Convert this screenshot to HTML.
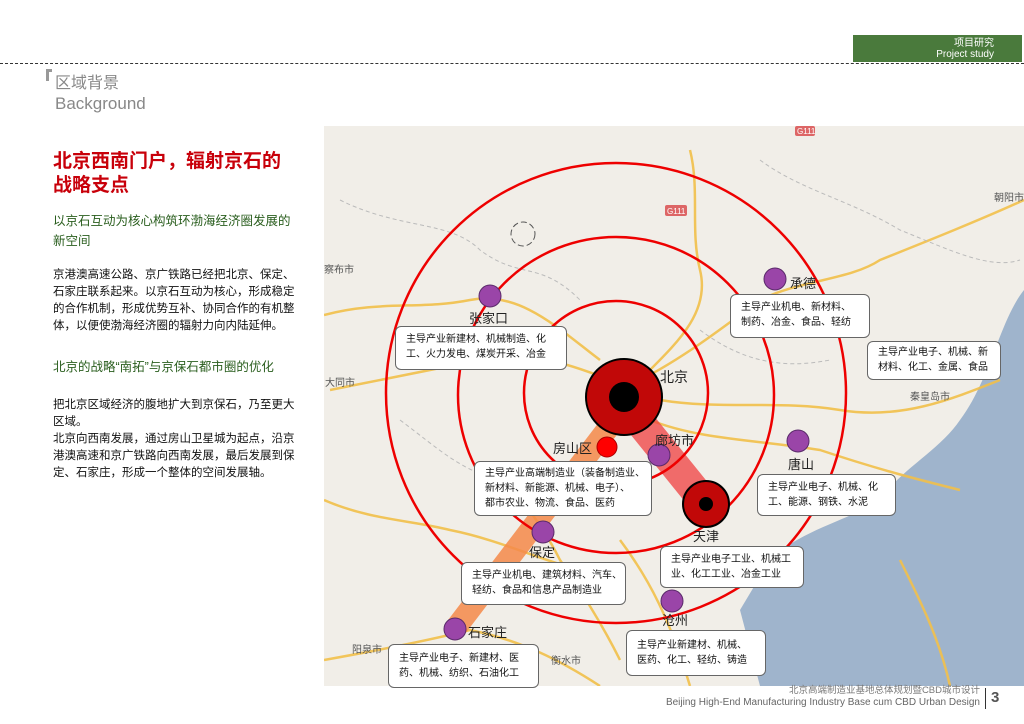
<!DOCTYPE html>
<html><head><meta charset="utf-8"><style>
*{margin:0;padding:0;box-sizing:border-box}
body{width:1024px;height:724px;background:#fff;position:relative;overflow:hidden;font-family:"Liberation Sans","Noto Sans CJK SC",sans-serif}
.a{position:absolute;white-space:nowrap}
.box{position:absolute;background:#fff;border:1px solid #666;border-radius:6px;font-size:10px;line-height:15px;padding:5px 0 0 10px;color:#111;white-space:nowrap}
p{margin:0}
</style></head><body>
<div class="a" style="left:853px;top:35px;width:169px;height:27px;background:#4a7a3c;color:#fff;font-size:10px;line-height:11px;text-align:right;padding:3px 28px 0 0">项目研究<br>Project study</div>
<div class="a" style="left:0;top:63px;width:1024px;border-top:1px dashed #333"></div>
<div class="a" style="left:46px;top:69px;width:6px;height:12px;border-left:3px solid #999;border-top:3px solid #999"></div>
<div class="a" style="left:55px;top:74px;font-size:16px;color:#888;line-height:20px">区域背景</div>
<div class="a" style="left:55px;top:94px;font-size:17px;color:#888;line-height:20px">Background</div>
<div class="a" style="left:53px;top:150px;font-size:19px;font-weight:bold;color:#c8000a;line-height:24px">北京西南门户，辐射京石的<br>战略支点</div>
<div class="a" style="left:53px;top:211px;font-size:12.5px;color:#2a5e1e;line-height:20px">以京石互动为核心构筑环渤海经济圈发展的<br>新空间</div>
<div class="a" style="left:53px;top:267px;font-size:11.5px;color:#111;line-height:17px">京港澳高速公路、京广铁路已经把北京、保定、<br>石家庄联系起来。以京石互动为核心，形成稳定<br>的合作机制，形成优势互补、协同合作的有机整<br>体，以便使渤海经济圈的辐射力向内陆延伸。</div>
<div class="a" style="left:53px;top:358px;font-size:12.5px;color:#2a5e1e;line-height:18px">北京的战略“南拓”与京保石都市圈的优化</div>
<div class="a" style="left:53px;top:397px;font-size:11.5px;color:#111;line-height:17px">把北京区域经济的腹地扩大到京保石，乃至更大<br>区域。<br>北京向西南发展，通过房山卫星城为起点，沿京<br>港澳高速和京广铁路向西南发展，最后发展到保<br>定、石家庄，形成一个整体的空间发展轴。</div>

<svg class="a" style="left:324px;top:126px" width="700" height="560" viewBox="324 126 700 560">
<rect x="324" y="126" width="700" height="560" fill="#f1eee8"/>
<path d="M1024 290 C1000 320 990 380 960 420 C940 450 900 470 880 500 C850 520 800 530 770 560 L740 610 L760 686 L1024 686 Z" fill="#9fb4cc"/>
<g fill="none" stroke="#f2c04a" stroke-width="2.5" opacity="0.9">
<path d="M324 315 C380 300 420 310 470 300 C520 290 560 330 600 360"/>
<path d="M330 390 C380 380 430 370 480 360 C520 350 560 360 610 380"/>
<path d="M640 380 C680 360 720 330 760 300 C800 280 850 280 880 260 C930 240 980 220 1024 200"/>
<path d="M660 400 C720 410 780 400 840 410 C900 420 950 400 1000 380"/>
<path d="M650 420 C700 440 760 440 820 450 C880 470 920 480 960 490"/>
<path d="M500 470 C520 500 540 520 560 560 C580 590 600 620 620 660"/>
<path d="M690 150 C700 190 690 230 700 270 C710 310 680 340 650 370"/>
<path d="M324 500 C370 520 410 520 450 530 C500 540 540 560 580 570"/>
<path d="M620 540 C650 580 670 620 690 686"/>
<path d="M324 660 C380 650 430 640 470 630 C520 640 560 660 600 686"/>
<path d="M900 560 C920 600 940 640 950 686"/>
</g>
<g fill="none" stroke="#bbb" stroke-width="1" stroke-dasharray="4 3">
<path d="M340 200 C400 230 450 220 480 250 C520 280 540 260 580 300"/>
<path d="M760 160 C800 190 850 200 900 230 C950 250 990 270 1020 260"/>
<path d="M400 420 C440 450 460 470 500 480"/>
<path d="M700 330 C740 360 780 370 830 360"/>
</g>
<line x1="622" y1="410" x2="455" y2="629" stroke="#f58a4a" stroke-width="22" opacity="0.85"/>
<line x1="630" y1="410" x2="706" y2="504" stroke="#f04040" stroke-width="30" opacity="0.75"/>
<g fill="none" stroke="#e00" stroke-width="2.5">
<circle cx="616" cy="393" r="230"/>
<circle cx="616" cy="395" r="158"/>
<circle cx="616" cy="393" r="92"/>
</g>
<circle cx="523" cy="234" r="12" fill="none" stroke="#555" stroke-width="1" stroke-dasharray="6 3"/>
<circle cx="624" cy="397" r="38" fill="#c10808" stroke="#000" stroke-width="2"/>
<circle cx="624" cy="397" r="15" fill="#000"/>
<circle cx="706" cy="504" r="23" fill="#c10808" stroke="#000" stroke-width="2"/>
<circle cx="706" cy="504" r="7" fill="#000"/>
<circle cx="607" cy="447" r="10" fill="#f00" stroke="#a00"/>
<g fill="#9a45a8" stroke="#5a2a6a" stroke-width="1">
<circle cx="490" cy="296" r="11"/><circle cx="775" cy="279" r="11"/><circle cx="659" cy="455" r="11"/>
<circle cx="798" cy="441" r="11"/><circle cx="543" cy="532" r="11"/><circle cx="672" cy="601" r="11"/><circle cx="455" cy="629" r="11"/>
</g>
<g font-family="Liberation Sans,Noto Sans CJK SC,sans-serif" fill="#222">
<text x="469" y="323" font-size="13">张家口</text>
<text x="790" y="288" font-size="13">承德</text>
<text x="660" y="382" font-size="14">北京</text>
<text x="553" y="453" font-size="13">房山区</text>
<text x="655" y="445" font-size="13">廊坊市</text>
<text x="788" y="469" font-size="13">唐山</text>
<text x="693" y="541" font-size="13">天津</text>
<text x="529" y="557" font-size="13">保定</text>
<text x="662" y="625" font-size="13">沧州</text>
<text x="468" y="637" font-size="13">石家庄</text>
<g font-size="10" fill="#555"><text x="324" y="273">察布市</text><text x="325" y="386">大同市</text><text x="352" y="653">阳泉市</text><text x="551" y="664">衡水市</text><text x="910" y="400">秦皇岛市</text><text x="994" y="201">朝阳市</text></g>
</g>
<rect x="795" y="126" width="20" height="10" fill="#d66" rx="2"/><text x="797" y="134" font-size="8" fill="#fff" font-family="Liberation Sans">G111</text>
<rect x="665" y="205" width="22" height="11" fill="#d66" rx="2"/><text x="667" y="214" font-size="8" fill="#fff" font-family="Liberation Sans">G111</text>
</svg>

<div class="box" style="left:395px;top:326px;width:172px;height:44px">主导产业新建材、机械制造、化<br>工、火力发电、煤炭开采、冶金</div>
<div class="box" style="left:730px;top:294px;width:140px;height:44px">主导产业机电、新材料、<br>制药、冶金、食品、轻纺</div>
<div class="box" style="left:867px;top:341px;width:134px;height:39px;padding-top:3px">主导产业电子、机械、新<br>材料、化工、金属、食品</div>
<div class="box" style="left:474px;top:461px;width:178px;height:55px;padding-top:4px">主导产业高端制造业（装备制造业、<br>新材料、新能源、机械、电子）、<br>都市农业、物流、食品、医药</div>
<div class="box" style="left:757px;top:474px;width:139px;height:42px">主导产业电子、机械、化<br>工、能源、钢铁、水泥</div>
<div class="box" style="left:660px;top:546px;width:144px;height:42px">主导产业电子工业、机械工<br>业、化工工业、冶金工业</div>
<div class="box" style="left:461px;top:562px;width:165px;height:43px">主导产业机电、建筑材料、汽车、<br>轻纺、食品和信息产品制造业</div>
<div class="box" style="left:626px;top:630px;width:140px;height:46px;padding-top:7px">主导产业新建材、机械、<br>医药、化工、轻纺、铸造</div>
<div class="box" style="left:388px;top:644px;width:151px;height:44px;padding-top:6px">主导产业电子、新建材、医<br>药、机械、纺织、石油化工</div>

<div class="a" style="right:44px;top:685px;font-size:9.5px;color:#777;line-height:11px">北京高端制造业基地总体规划暨CBD城市设计</div>
<div class="a" style="right:44px;top:697px;font-size:10px;color:#666;line-height:12px">Beijing High-End Manufacturing Industry Base cum CBD Urban Design</div>
<div class="a" style="left:985px;top:688px;width:1px;height:21px;background:#333"></div>
<div class="a" style="left:991px;top:689px;font-size:15px;font-weight:bold;color:#555">3</div>
</body></html>
